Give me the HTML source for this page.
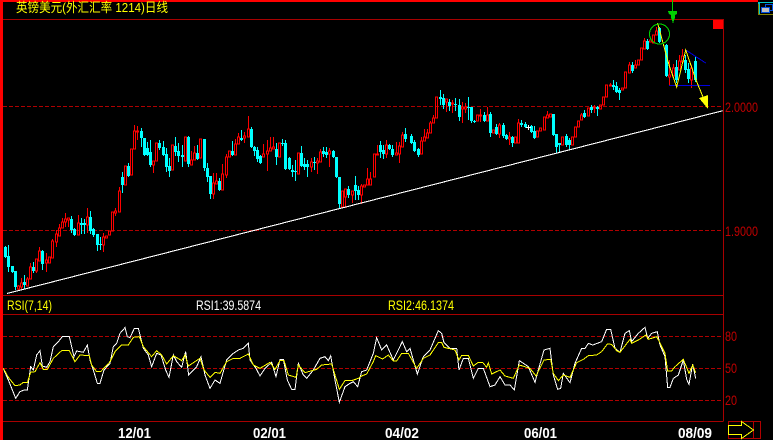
<!DOCTYPE html>
<html><head><meta charset="utf-8"><style>
html,body{margin:0;padding:0;background:#000;width:773px;height:440px;overflow:hidden}
svg{display:block}
text{font-family:"Liberation Sans","WenQuanYi Zen Hei","Noto Sans CJK SC",sans-serif}
</style></head><body>
<svg xmlns="http://www.w3.org/2000/svg" width="773" height="440" viewBox="0 0 773 440">
<rect width="773" height="440" fill="#000"/>
<g shape-rendering="crispEdges">
<path fill="none" stroke="#b00000" stroke-width="1" stroke-dasharray="4 2" d="M3 106.5H723M3 230.5H723M3 336.5H723M3 368.5H723M3 400.5H723"/>
<path fill="none" stroke="#a80000" stroke-width="1" d="M3 19.5H723.5M3 295.5H723.5M3 314.5H723.5M3 421.5H723.5M723.5 19V421"/>
<rect x="713" y="20" width="10" height="9" fill="#f00"/>
<rect x="0" y="0" width="758" height="2" fill="#f00"/>
<rect x="0" y="0" width="3" height="440" fill="#f00"/>
<!-- cyan wicks -->
<path fill="none" stroke="#00ffff" stroke-width="1" d="M5.5 246V258M8.5 245V272M12.5 266V273M15.5 271V290M24.5 275V289M33.5 262V273M42.5 250V270M71.5 216V233M74.5 228V236M81.5 218V234M84.5 219V234M90.5 211V234M93.5 228V237M97.5 234V251M100.5 237V250M122.5 172V193M128.5 163V177M141.5 128V147M144.5 138V156M147.5 142V156M150.5 140V167M159.5 140V150M163.5 141V156M166.5 148V172M169.5 158V177M175.5 137V156M178.5 143V162M182.5 145V167M188.5 136V167M197.5 145V160M204.5 139V171M207.5 163V182M210.5 176V199M219.5 178V191M232.5 141V156M241.5 130V141M251.5 127V148M254.5 146V156M257.5 147V162M260.5 155V164M276.5 143V165M282.5 139V146M285.5 140V170M289.5 157V170M292.5 165V177M295.5 160V181M301.5 146V167M304.5 158V170M307.5 160V177M314.5 157V170M323.5 147V157M326.5 147V158M333.5 150V158M336.5 157V178M339.5 177V208M348.5 186V198M355.5 176V200M358.5 186V200M380.5 141V158M383.5 145V159M389.5 144V150M392.5 145V157M405.5 128V142M411.5 134V144M414.5 140V152M418.5 148V157M440.5 90V105M443.5 94V109M449.5 99V111M455.5 98V111M459.5 99V121M468.5 97V120M471.5 107V123M474.5 120V123M484.5 112V122M490.5 112V137M496.5 124V135M503.5 123V138M506.5 134V140M512.5 136V147M521.5 120V127M525.5 122V128M531.5 125V133M534.5 126V139M553.5 114V136M556.5 134V153M559.5 143V152M566.5 134V147M569.5 138V150M584.5 110V118M591.5 105V113M597.5 106V116M613.5 80V90M616.5 82V93M619.5 88V100M632.5 62V73M647.5 39V50M659.5 27V43M666.5 44V77M676.5 60V83M685.5 55V73M688.5 63V83M695.5 57V82"/>
<!-- cyan bodies -->
<path fill="none" stroke="#00ffff" stroke-width="3" d="M5.5 247V257M8.5 256V267M12.5 266V272M15.5 271V287M24.5 282V285M33.5 267V271M42.5 251V264M71.5 219V230M74.5 229V235M81.5 223V225M84.5 223V225M90.5 217V231M93.5 229V235M97.5 234V245M100.5 244V245M122.5 177V185M128.5 166V176M141.5 131V138M144.5 138V155M147.5 148V155M150.5 152V165M159.5 143V148M163.5 147V155M166.5 154V167M169.5 166V171M175.5 146V152M178.5 151V156M182.5 155V157M188.5 137V164M197.5 153V159M204.5 139V168M207.5 168V177M210.5 176V194M219.5 181V190M232.5 151V155M241.5 138V140M251.5 129V147M254.5 147V151M257.5 150V159M260.5 156V163M276.5 149V157M282.5 143V144M285.5 143V169M289.5 158V169M292.5 170V172M295.5 171V172M301.5 153V166M304.5 164V167M307.5 164V167M314.5 162V163M323.5 151V154M326.5 152V155M333.5 151V157M336.5 157V177M339.5 177V204M348.5 189V195M355.5 185V191M358.5 190V195M380.5 145V152M383.5 150V154M389.5 145V149M392.5 149V155M405.5 134V139M411.5 136V143M414.5 142V151M418.5 149V155M440.5 97V99M443.5 98V105M449.5 102V106M455.5 104V105M459.5 105V117M468.5 107V108M471.5 107V121M474.5 121V122M484.5 115V121M490.5 114V133M496.5 127V134M503.5 125V136M506.5 135V139M512.5 137V143M521.5 123V125M525.5 124V127M531.5 126V132M534.5 131V138M553.5 114V135M556.5 134V147M559.5 143V145M566.5 136V145M569.5 140V145M584.5 113V117M591.5 107V110M597.5 107V109M613.5 85V87M616.5 86V92M619.5 90V93M632.5 65V71M647.5 41V49M659.5 28V42M666.5 45V76M676.5 67V80M685.5 60V70M688.5 69V79M695.5 61V80"/>
<!-- red candles -->
<path fill="none" stroke="#ff0000" stroke-width="1" d="M17.5 286h2V289h-2zM18.5 285V286M18.5 289V290M20.5 283h2V287h-2zM21.5 278V283M21.5 287V290M26.5 279h2V286h-2zM27.5 277V279M29.5 267h2V279h-2zM30.5 263V267M35.5 259h2V271h-2zM36.5 271V273M38.5 251h2V261h-2zM39.5 247V251M45.5 260h2V263h-2zM46.5 253V260M46.5 263V272M48.5 257h2V263h-2zM51.5 241h2V258h-2zM52.5 239V241M55.5 234h2V242h-2zM56.5 230V234M56.5 242V247M58.5 228h2V236h-2zM59.5 224V228M61.5 222h2V228h-2zM62.5 218V222M64.5 219h2V222h-2zM65.5 213V219M65.5 222V227M67.5 218h2V220h-2zM68.5 220V227M77.5 223h2V235h-2zM78.5 215V223M86.5 217h2V225h-2zM87.5 208V217M87.5 225V233M102.5 237h2V245h-2zM103.5 233V237M103.5 245V252M105.5 236h2V238h-2zM108.5 231h2V235h-2zM111.5 212h2V231h-2zM114.5 211h2V213h-2zM115.5 208V211M115.5 213V216M118.5 191h2V212h-2zM119.5 187V191M124.5 166h2V185h-2zM130.5 149h2V175h-2zM133.5 131h2V149h-2zM134.5 125V131M136.5 131h2V132h-2zM137.5 126V131M137.5 132V140M152.5 161h2V165h-2zM153.5 165V173M155.5 143h2V161h-2zM171.5 145h2V170h-2zM184.5 137h2V161h-2zM190.5 160h2V165h-2zM191.5 151V160M193.5 153h2V160h-2zM194.5 146V153M199.5 139h2V158h-2zM212.5 183h2V194h-2zM213.5 173V183M213.5 194V199M215.5 181h2V184h-2zM216.5 173V181M221.5 174h2V190h-2zM222.5 164V174M225.5 157h2V175h-2zM226.5 154V157M226.5 175V178M228.5 151h2V157h-2zM234.5 144h2V155h-2zM235.5 139V144M237.5 137h2V144h-2zM238.5 133V137M243.5 136h2V138h-2zM244.5 132V136M244.5 138V143M247.5 129h2V137h-2zM248.5 116V129M262.5 154h2V157h-2zM263.5 144V154M266.5 151h2V154h-2zM267.5 140V151M267.5 154V171M269.5 148h2V151h-2zM270.5 137V148M272.5 147h2V149h-2zM273.5 137V147M278.5 143h2V157h-2zM297.5 153h2V174h-2zM310.5 162h2V167h-2zM311.5 158V162M311.5 167V172M316.5 161h2V163h-2zM317.5 158V161M317.5 163V174M319.5 152h2V162h-2zM320.5 149V152M328.5 151h2V154h-2zM329.5 148V151M329.5 154V167M341.5 191h2V207h-2zM344.5 189h2V197h-2zM345.5 197V208M351.5 191h2V195h-2zM352.5 195V203M360.5 186h2V195h-2zM361.5 184V186M361.5 195V204M363.5 185h2V187h-2zM366.5 179h2V185h-2zM367.5 168V179M369.5 179h2V185h-2zM370.5 172V179M373.5 154h2V177h-2zM376.5 154h2V155h-2zM377.5 145V154M385.5 145h2V154h-2zM386.5 140V145M386.5 154V158M395.5 153h2V155h-2zM396.5 142V153M398.5 146h2V154h-2zM399.5 142V146M399.5 154V163M401.5 135h2V147h-2zM402.5 132V135M420.5 141h2V154h-2zM421.5 137V141M423.5 137h2V141h-2zM424.5 129V137M426.5 133h2V138h-2zM427.5 129V133M429.5 123h2V133h-2zM430.5 121V123M432.5 118h2V123h-2zM433.5 115V118M435.5 97h2V118h-2zM445.5 99h2V102h-2zM446.5 102V112M451.5 103h2V104h-2zM452.5 100V103M452.5 104V113M461.5 107h2V109h-2zM462.5 102V107M462.5 109V123M464.5 107h2V109h-2zM465.5 103V107M465.5 109V113M476.5 115h2V121h-2zM479.5 115h2V116h-2zM480.5 109V115M480.5 116V122M486.5 115h2V121h-2zM487.5 107V115M492.5 130h2V133h-2zM498.5 125h2V134h-2zM499.5 123V125M499.5 134V138M508.5 137h2V139h-2zM509.5 132V137M509.5 139V145M514.5 137h2V143h-2zM517.5 123h2V143h-2zM518.5 119V123M536.5 131h2V137h-2zM539.5 128h2V131h-2zM543.5 117h2V130h-2zM546.5 115h2V118h-2zM547.5 111V115M549.5 114h2V117h-2zM561.5 137h2V145h-2zM571.5 137h2V145h-2zM574.5 127h2V137h-2zM577.5 121h2V127h-2zM580.5 115h2V120h-2zM581.5 113V115M587.5 108h2V116h-2zM593.5 107h2V108h-2zM594.5 105V107M594.5 108V113M599.5 105h2V109h-2zM602.5 97h2V105h-2zM605.5 85h2V97h-2zM609.5 85h2V86h-2zM610.5 83V85M621.5 88h2V90h-2zM624.5 72h2V88h-2zM628.5 65h2V73h-2zM629.5 62V65M634.5 65h2V68h-2zM635.5 60V65M637.5 60h2V65h-2zM640.5 48h2V60h-2zM643.5 41h2V49h-2zM644.5 38V41M649.5 40h2V42h-2zM652.5 35h2V43h-2zM655.5 31h2V35h-2zM656.5 27V31M668.5 75h2V77h-2zM669.5 60V75M669.5 77V85M672.5 68h2V76h-2zM673.5 64V68M678.5 61h2V70h-2zM679.5 55V61M681.5 56h2V62h-2zM682.5 49V56M690.5 68h2V80h-2zM691.5 65V68M691.5 80V88"/>
<path fill="none" stroke="#fff" d="M526 127.5h5M528.5 125V130"/>
<!-- trend line -->
<path fill="none" stroke="#fff" stroke-width="1.1" d="M7 293.5L722.7 110.7"/>
<!-- annotations -->
<path fill="none" stroke="#0000e0" d="M685.7 50L705.7 63M669 85.5H710"/>
<polyline fill="none" stroke="#ffff00" points="657.6,23 663,43 669,65 676.7,87 685.7,50 696,80 706.7,106"/>
<polygon fill="#ffff00" points="699,98 708,95 708,109"/>
<path fill="none" stroke="#00d000" d="M672.5 0V11"/>
<polygon fill="#00d000" points="668,11 677,11 677,14 675,15 675,18 674,20 673,24 672,20 671,18 671,15 669,14"/>
<circle cx="659.5" cy="34" r="10" fill="none" stroke="#00d000"/>
<!-- RSI -->
<g transform="translate(0,290) scale(.33333)" fill="none" stroke-width="3">
<polyline stroke="#fff" points="10,235 25,270 35,295 47,325 60,305 72,300 82,300 92,230 100,240 110,195 120,182 127,228 140,232 150,215 160,170 175,155 187,140 208,140 222,200 230,183 250,187 262,165 270,210 280,240 292,280 300,280 312,240 330,220 340,170 350,160 360,130 375,113 382,140 390,143 403,115 415,115 430,175 445,195 455,230 470,190 483,195 497,240 507,262 520,195 530,215 545,232 557,185 566,255 590,230 603,200 615,255 630,295 645,270 660,280 680,210 700,190 715,180 730,175 745,160 750,210 768,235 780,258 795,235 815,217 828,260 840,208 850,208 862,270 875,298 885,298 895,220 910,255 920,265 940,240 960,205 975,200 985,212 992,197 1005,270 1018,337 1035,290 1050,280 1060,275 1073,290 1085,245 1100,240 1120,190 1130,143 1145,180 1160,165 1180,210 1207,155 1220,185 1230,175 1252,252 1270,200 1290,180 1315,122 1325,130 1332,158 1350,175 1370,175 1377,240 1390,205 1405,205 1420,265 1435,235 1450,235 1470,290 1485,285 1500,260 1515,285 1530,285 1543,300 1558,212 1585,230 1605,277 1615,240 1632,180 1650,175 1660,255 1673,298 1682,295 1690,250 1710,278 1725,220 1745,175 1755,175 1765,160 1778,165 1792,160 1805,155 1820,118 1832,118 1845,175 1860,187 1875,130 1888,122 1895,155 1915,130 1935,112 1943,145 1955,130 1972,125 1980,165 1995,200 2003,292 2010,292 2020,265 2035,255 2050,210 2060,268 2067,283 2078,222 2087,265"/>
<polyline stroke="#ffff00" points="10,235 25,262 45,287 60,285 70,277 82,278 92,247 105,245 120,218 130,238 142,238 160,205 185,182 208,182 225,215 240,195 268,197 275,225 290,245 302,245 330,215 345,185 365,165 385,165 400,142 418,140 430,170 455,200 470,182 485,195 500,222 520,197 545,212 555,195 565,228 600,205 612,240 630,262 645,247 660,250 680,215 700,205 720,205 745,192 760,225 780,235 810,217 825,238 840,212 852,212 865,255 888,262 895,225 915,248 950,238 965,225 995,222 1005,255 1018,298 1035,272 1055,272 1075,265 1085,258 1100,252 1120,215 1127,197 1148,207 1165,195 1180,213 1190,213 1205,190 1225,190 1250,235 1270,205 1290,195 1315,158 1325,158 1332,172 1365,180 1377,210 1385,196 1405,196 1420,228 1435,217 1448,217 1460,232 1465,218 1475,252 1500,240 1515,258 1540,265 1558,225 1590,235 1608,258 1632,210 1652,208 1660,250 1675,272 1690,255 1710,262 1730,218 1750,208 1765,197 1790,195 1805,185 1822,162 1835,163 1850,182 1860,187 1890,148 1895,160 1915,150 1938,135 1945,148 1970,140 1978,155 1995,190 2003,243 2015,243 2025,230 2050,208 2067,250 2078,225 2087,248"/>
</g>
<!-- top-right icon -->
<rect x="758" y="2" width="15" height="13" fill="#00c8c8"/>
<path fill="#808000" d="M758 14h15v1h-15zM758 4h1v11h-1z"/>
<rect x="760" y="3" width="13" height="11" fill="#000"/>
<rect x="765.5" y="4.5" width="7" height="6" fill="#000" stroke="#0050e0"/>
<rect x="761.5" y="7.5" width="8" height="5" fill="#c0c0c0" stroke="#0050e0"/>
<!-- next button -->
<rect x="728.5" y="421.5" width="32" height="17" fill="none" stroke="#b00000"/>
<path fill="none" stroke="#b00000" d="M753.5 421V439"/>
<path fill="none" stroke="#ffff00" d="M728.5 425.5H741.5V421.5L753.5 430L741.5 438.5V434.5H728.5Z"/>
</g>
<!-- text -->
<text x="16" y="12" font-size="13" fill="#ffff00" textLength="152" lengthAdjust="spacingAndGlyphs" font-family="'Liberation Sans','WenQuanYi Zen Hei',sans-serif">英镑美元(外汇汇率 1214)日线</text>
<g font-size="14" fill="#c00000">
<text x="725" y="112" textLength="33" lengthAdjust="spacingAndGlyphs">2.0000</text>
<text x="725" y="236" textLength="33" lengthAdjust="spacingAndGlyphs">1.9000</text>
<text x="725" y="341" textLength="12" lengthAdjust="spacingAndGlyphs">80</text>
<text x="725" y="373" textLength="12" lengthAdjust="spacingAndGlyphs">50</text>
<text x="725" y="405" textLength="12" lengthAdjust="spacingAndGlyphs">20</text>
</g>
<g font-size="14">
<text x="7" y="310" fill="#ffff00" textLength="45" lengthAdjust="spacingAndGlyphs">RSI(7,14)</text>
<text x="196" y="310" fill="#fff" textLength="65" lengthAdjust="spacingAndGlyphs">RSI1:39.5874</text>
<text x="388" y="310" fill="#ffff00" textLength="66" lengthAdjust="spacingAndGlyphs">RSI2:46.1374</text>
</g>
<g font-size="15" font-weight="bold" fill="#fff">
<text x="118" y="438" textLength="33" lengthAdjust="spacingAndGlyphs">12/01</text>
<text x="253" y="438" textLength="33" lengthAdjust="spacingAndGlyphs">02/01</text>
<text x="385" y="438" textLength="34" lengthAdjust="spacingAndGlyphs">04/02</text>
<text x="524" y="438" textLength="33" lengthAdjust="spacingAndGlyphs">06/01</text>
<text x="678" y="438" textLength="34" lengthAdjust="spacingAndGlyphs">08/09</text>
</g>
</svg>
</body></html>
